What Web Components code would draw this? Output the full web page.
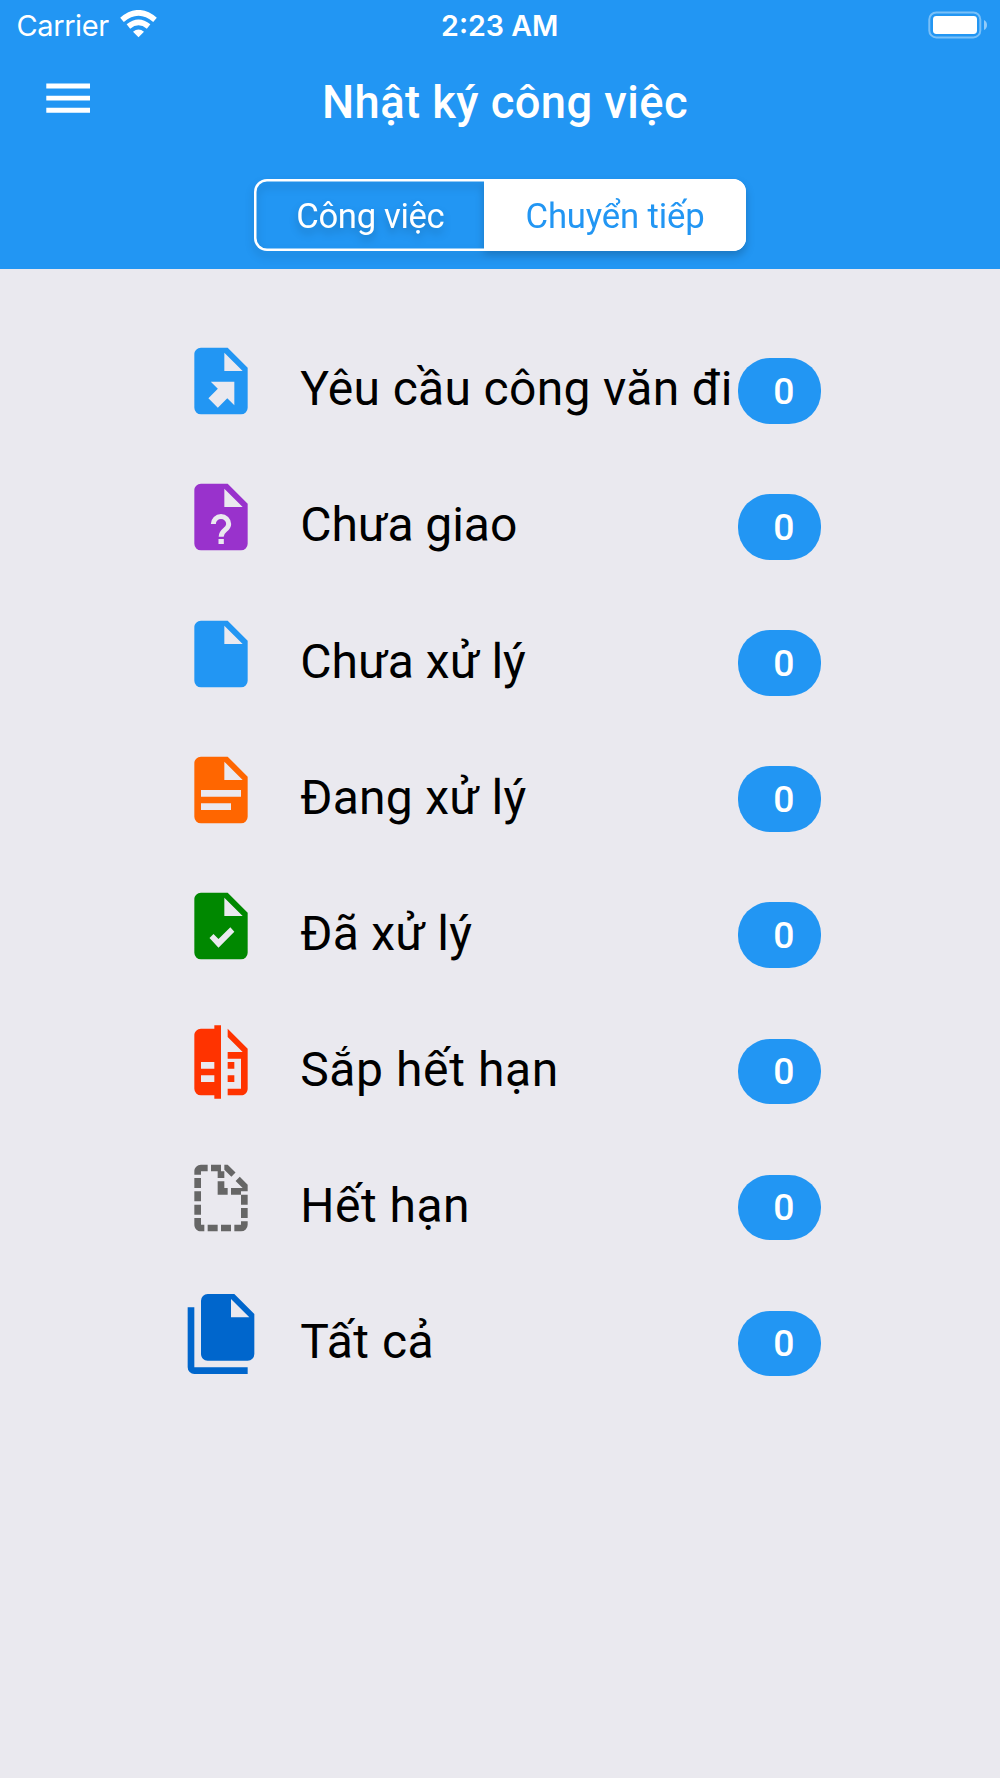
<!DOCTYPE html>
<html lang="vi">
<head>
<meta charset="utf-8">
<title>Nhật ký công việc</title>
<style>
  html, body {
    margin: 0;
    height: 100%;
    background: #eae9ef;
    font-family: Roboto, "Noto Sans", sans-serif;
    --primary: #2296f3;
  }
</style>
</head>
<body>
<work-log-app></work-log-app>

<script>
const FILE = 'M13,9V3.5L18.5,9M6,2C4.89,2 4,2.89 4,4V20A2,2 0 0,0 6,22H18A2,2 0 0,0 20,20V8L14,2H6Z';

const ICONS = {
  menu: '<path d="M3,6H21V8H3V6M3,11H21V13H3V11M3,16H21V18H3V16Z"/>',
  export: `<path d="${FILE}M8.93,12.22H16V19.29L13.88,17.17L11.05,20L8.22,17.17L11.05,14.35Z"/>`,
  question: `<path d="${FILE}"/>
    <path d="M9.7,14.1A2.3,2.25 0 0,1 14.3,14.1C14.3,15.9 12.05,15.9 12.05,17.9" fill="none" stroke="#eae9ef" stroke-width="1.5"/>
    <rect x="11.25" y="18.6" width="1.6" height="1.5" fill="#eae9ef"/>`,
  file: `<path d="${FILE}"/>`,
  document: `<path d="${FILE}M6,12H18V14H6ZM6,16H15V18H6Z"/>`,
  check: `<path d="${FILE}M11.25,18.5L8.55,15.6L9.75,14.4L11.25,15.9L14.8,12.35L16,13.75Z"/>`,
  compare: '<path d="M10,18H6V16H10V18M10,14H6V12H10V14M10,1V2H6C4.89,2 4,2.89 4,4V20A2,2 0 0,0 6,22H10V23H12V1H10M20,8V20C20,21.11 19.11,22 18,22H14V20H18V11H14V9H18.5L14,4.5V2L20,8M16,14H14V12H16V14M16,18H14V16H16V18Z"/>',
  hidden: '<path d="M13,9H14V11H11V7H13V9M18.5,9L16.38,6.88L17.63,5.63L20,8V10H18V11H15V9H18.5M13,3.5V2H12V4H13V6H11V4H9V2H8V4H6V5H4V4C4,2.89 4.89,2 6,2H14L16.36,4.36L15.11,5.61L13,3.5M20,20A2,2 0 0,1 18,22H16V20H18V19H20V20M18,15H20V18H18V15M12,22V20H15V22H12M8,22V20H11V22H8M6,22C4.89,22 4,21.1 4,20V18H6V20H7V22H6M4,14H6V17H4V14M4,10H6V13H4V10M18,11H20V14H18V11M4,6H6V9H4V6Z"/>',
  multiple: '<path d="M15,7H20.5L15,1.5V7M8,0H16L22,6V18A2,2 0 0,1 20,20H8C6.89,20 6,19.1 6,18V2A2,2 0 0,1 8,0M4,4V22H20V24H4A2,2 0 0,1 2,22V4H4Z"/>'
};

class AppIcon extends HTMLElement {
  constructor() {
    super();
    this.attachShadow({ mode: 'open' });
  }

  connectedCallback() {
    this.shadowRoot.innerHTML = `
      <style>
        :host { display: block; flex: none; width: 80px; height: 80px; }
        svg { display: block; width: 100%; height: 100%; fill: currentColor; fill-rule: evenodd; }
      </style>
      <svg viewBox="0 0 24 24">${ICONS[this.getAttribute('name')] || ''}</svg>
    `;
  }
}

class StatusBar extends HTMLElement {
  constructor() {
    super();
    this.attachShadow({ mode: 'open' }).innerHTML = `
      <style>
        :host {
          display: grid;
          grid-template-columns: 1fr auto 1fr;
          align-items: center;
          height: 50px;
          padding: 0 13px 0 16.5px;
          font: 400 29px/50px Inter, sans-serif;
          color: #fff;
        }
        .left { display: flex; align-items: center; }
        .carrier { width: 103.5px; padding-top: 1px; letter-spacing: -0.4px; }
        .wifi { width: 37px; height: 28px; margin-top: -3px; }
        .time { padding-top: 1px; margin-right: 4px; font-size: 28.6px; font-weight: 600; }
        .battery { justify-self: end; width: 59px; height: 28px; margin-top: -2px; }
      </style>
      <div class="left">
        <span class="carrier">Carrier</span>
        <svg class="wifi" viewBox="0 0 37 28" fill="none" stroke="#fff" stroke-width="5.6">
          <path d="M2,9.8Q18.5,-4.2 35,9.8"/>
          <path d="M8.4,16.5Q18.5,8.3 28.6,16.5"/>
          <path d="M13,21.7Q18.5,17.3 24,21.7L18.5,27.3Z" fill="#fff" stroke="none"/>
        </svg>
      </div>
      <span class="time">2:23 AM</span>
      <svg class="battery" viewBox="0 0 59 28">
        <rect x="1.3" y="1.4" width="51" height="25" rx="7" fill="none" stroke="#fff" stroke-opacity=".4" stroke-width="2"/>
        <rect x="5" y="5" width="44" height="18" rx="3.4" fill="#fff"/>
        <path d="M56,9Q59,10.5 59,14T56,19Z" fill="#fff" fill-opacity=".5"/>
      </svg>
    `;
  }
}

class SegmentedControl extends HTMLElement {
  constructor() {
    super();
    this.attachShadow({ mode: 'open' }).innerHTML = `
      <style>
        :host {
          display: flex;
          width: 491.4px;
          height: 72.6px;
          border-radius: 13px;
          box-shadow: inset 0 0 0 2.5px #fff;
          filter: drop-shadow(0 5px 4px rgba(0, 0, 0, .2));
        }
        ::slotted(*) {
          display: flex;
          align-items: center;
          justify-content: center;
          box-sizing: border-box;
          width: 230px;
          padding: 2px 0 0 2px;
          font-size: 34.67px;
          letter-spacing: -0.33px;
          color: #fff;
        }
        ::slotted([selected]) {
          flex: 1;
          padding-left: 0;
          background: #fff;
          color: var(--primary);
          letter-spacing: -0.15px;
          border-radius: 0 13px 13px 0;
        }
      </style>
      <slot></slot>
    `;
  }
}

class AppHeader extends HTMLElement {
  constructor() {
    super();
    this.attachShadow({ mode: 'open' }).innerHTML = `
      <style>
        :host {
          display: flex;
          flex-direction: column;
          height: 268.7px;
          background: var(--primary);
          color: #fff;
        }
        .bar {
          display: grid;
          grid-template-columns: 97px 1fr 97px;
          align-items: center;
          height: 106px;
        }
        .bar app-icon { width: 58.3px; height: 58.3px; margin: -9px 0 0 38.7px; }
        h1 {
          margin: 0;
          padding: 0 0 0 10px;
          text-align: center;
          font-size: 45.33px;
          font-weight: 500;
          letter-spacing: 0.42px;
          line-height: 60px;
        }
        .tabs { display: flex; justify-content: center; padding-top: 22.7px; }
      </style>
      <status-bar></status-bar>
      <div class="bar">
        <app-icon name="menu"></app-icon>
        <h1><slot name="title"></slot></h1>
      </div>
      <div class="tabs"><slot></slot></div>
    `;
  }
}

class CountBadge extends HTMLElement {
  constructor() {
    super();
    this.attachShadow({ mode: 'open' }).innerHTML = `
      <style>
        :host {
          display: flex;
          flex: none;
          align-items: center;
          justify-content: center;
          box-sizing: border-box;
          width: 82.2px;
          height: 65.4px;
          padding-left: 9px;
          border-radius: 32px;
          background: var(--primary);
          color: #fff;
          font-size: 37.33px;
          font-weight: 500;
        }
      </style>
      <slot></slot>
    `;
  }
}

class StatusRow extends HTMLElement {
  constructor() {
    super();
    this.attachShadow({ mode: 'open' });
  }

  connectedCallback() {
    this.shadowRoot.innerHTML = `
      <style>
        :host {
          display: flex;
          align-items: center;
          height: 136.07px;
          padding: 0 179.5px 0 181.2px;
        }
        app-icon { color: ${this.getAttribute('color')}; }
        .label {
          flex: 1;
          padding: 16px 0 0 39px;
          font-size: 48px;
          line-height: 56px;
          letter-spacing: ${this.getAttribute('tracking') || 0}px;
          white-space: nowrap;
          color: #000;
        }
        count-badge { margin-top: 19px; }
      </style>
      <app-icon name="${this.getAttribute('icon')}"></app-icon>
      <div class="label"><slot></slot></div>
      <count-badge>${this.getAttribute('count') || 0}</count-badge>
    `;
  }
}

class WorkLogApp extends HTMLElement {
  constructor() {
    super();
    this.attachShadow({ mode: 'open' }).innerHTML = `
      <style>
        :host { display: block; }
        main { padding-top: 44.7px; }
      </style>
      <app-header>
        <span slot="title">Nhật ký công việc</span>
        <segmented-control>
          <span>Công việc</span>
          <span selected>Chuyển tiếp</span>
        </segmented-control>
      </app-header>
      <main>
        <status-row icon="export" color="#2296f3" count="0" tracking="0.33">Yêu cầu công văn đi</status-row>
        <status-row icon="question" color="#9932cc" count="0" tracking="-0.05">Chưa giao</status-row>
        <status-row icon="file" color="#2296f3" count="0" tracking="0.05">Chưa xử lý</status-row>
        <status-row icon="document" color="#ff6600" count="0" tracking="0.28">Đang xử lý</status-row>
        <status-row icon="check" color="#008800" count="0" tracking="0.25">Đã xử lý</status-row>
        <status-row icon="compare" color="#ff3300" count="0" tracking="0.6">Sắp hết hạn</status-row>
        <status-row icon="hidden" color="#666666" count="0" tracking="0.5">Hết hạn</status-row>
        <status-row icon="multiple" color="#0066cc" count="0" tracking="0.5">Tất cả</status-row>
      </main>
    `;
  }
}

customElements.define('app-icon', AppIcon);
customElements.define('status-bar', StatusBar);
customElements.define('segmented-control', SegmentedControl);
customElements.define('app-header', AppHeader);
customElements.define('count-badge', CountBadge);
customElements.define('status-row', StatusRow);
customElements.define('work-log-app', WorkLogApp);
</script>
</body>
</html>
